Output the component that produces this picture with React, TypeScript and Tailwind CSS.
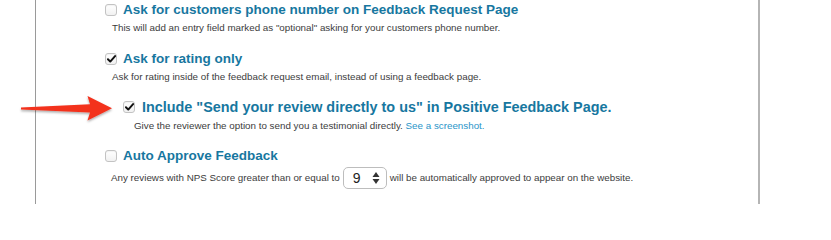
import React from "react";

function Box({ checked }: { checked?: boolean }) {
  return (
    <span className="relative inline-flex h-[12px] w-[12px] shrink-0 items-center justify-center rounded-[3px] border border-[#c3c3c3] bg-gradient-to-b from-white to-[#f1f1f1] shadow-[inset_0_1px_1px_rgba(0,0,0,0.05)]">
      {checked && (
        <svg width="9" height="8" viewBox="0 0 10 9" className="block">
          <path d="M1 4.8 L3.6 7.4 L9 1.2" fill="none" stroke="#111" strokeWidth="2.2" strokeLinecap="round" strokeLinejoin="round" />
        </svg>
      )}
    </span>
  );
}

export default function App() {
  const title = "text-[13.5px] font-bold leading-[20px] text-[#1777a0] whitespace-nowrap";
  const desc = "text-[9.8px] leading-[16px] text-[#3c3c3c] whitespace-nowrap";
  return (
    <div
      className="relative h-[204px] w-[831px] overflow-hidden bg-white"
      style={{ fontFamily: '"Liberation Sans", Arial, sans-serif' }}
    >
      <div className="ml-[35px] h-[204px] w-[725px] border-l border-r-2 border-l-[#9a9a9a] border-r-[#b5b5b5]">
        <div className="flex flex-col pl-[69px]">
          {/* Row 1 */}
          <div className="h-[49px]">
            <div className="flex h-[20px] items-center gap-[6px]">
              <Box />
              <span className={title}>Ask for customers phone number on Feedback Request Page</span>
            </div>
            <div className={`${desc} pl-[7px]`}>
              This will add an entry field marked as "optional" asking for your customers phone number.
            </div>
          </div>
          {/* Row 2 */}
          <div className="h-[48px]">
            <div className="flex h-[20px] items-center gap-[6px]">
              <Box checked />
              <span className={title}>Ask for rating only</span>
            </div>
            <div className={`${desc} pl-[7px]`}>
              Ask for rating inside of the feedback request email, instead of using a feedback page.
            </div>
          </div>
          {/* Row 3 */}
          <div className="h-[49px] pl-[18px]">
            <div className="flex h-[20px] items-center gap-[7px]">
              <Box checked />
              <span className="whitespace-nowrap text-[14.4px] font-bold leading-[20px] text-[#1777a0]">
                Include "Send your review directly to us" in Positive Feedback Page.
              </span>
            </div>
            <div className={`${desc} mt-[1px] pl-[11px]`}>
              Give the reviewer the option to send you a testimonial directly.{" "}
              <span className="text-[#2a95c9]">See a screenshot.</span>
            </div>
          </div>
          {/* Row 4 */}
          <div>
            <div className="flex h-[20px] items-center gap-[6px]">
              <Box />
              <span className={title}>Auto Approve Feedback</span>
            </div>
            <div className={`${desc} mt-[1px] flex h-[22px] items-center pl-[6px]`}>
              <span>Any reviews with NPS Score greater than or equal to</span>
              <span className="mx-[3px] flex h-[22px] w-[44px] items-center justify-between rounded-[5px] border border-[#bdbdbd] bg-white pl-[9px] pr-[6px]">
                <span className="text-[14px] leading-none text-[#222]">9</span>
                <svg width="8" height="14" viewBox="0 0 8 14">
                  <path d="M4 1 L7.5 6 L0.5 6 Z" fill="#333" />
                  <path d="M4 13 L7.5 8 L0.5 8 Z" fill="#333" />
                </svg>
              </span>
              <span>will be automatically approved to appear on the website.</span>
            </div>
          </div>
        </div>
      </div>
      {/* Arrow annotation */}
      <svg
        className="pointer-events-none absolute left-0 top-0"
        width="140"
        height="140"
        viewBox="0 0 140 140"
      >
        <defs>
          <filter id="sh" x="-20%" y="-20%" width="140%" height="160%">
            <feDropShadow dx="0" dy="1.5" stdDeviation="1.2" floodColor="#000" floodOpacity="0.35" />
          </filter>
        </defs>
        <path
          d="M21 107.6 L90 104.2 L87.5 96 L112 108.3 L87.5 120.5 L90 112.4 L21 109.4 Z"
          fill="#f3301c"
          filter="url(#sh)"
        />
      </svg>
    </div>
  );
}
